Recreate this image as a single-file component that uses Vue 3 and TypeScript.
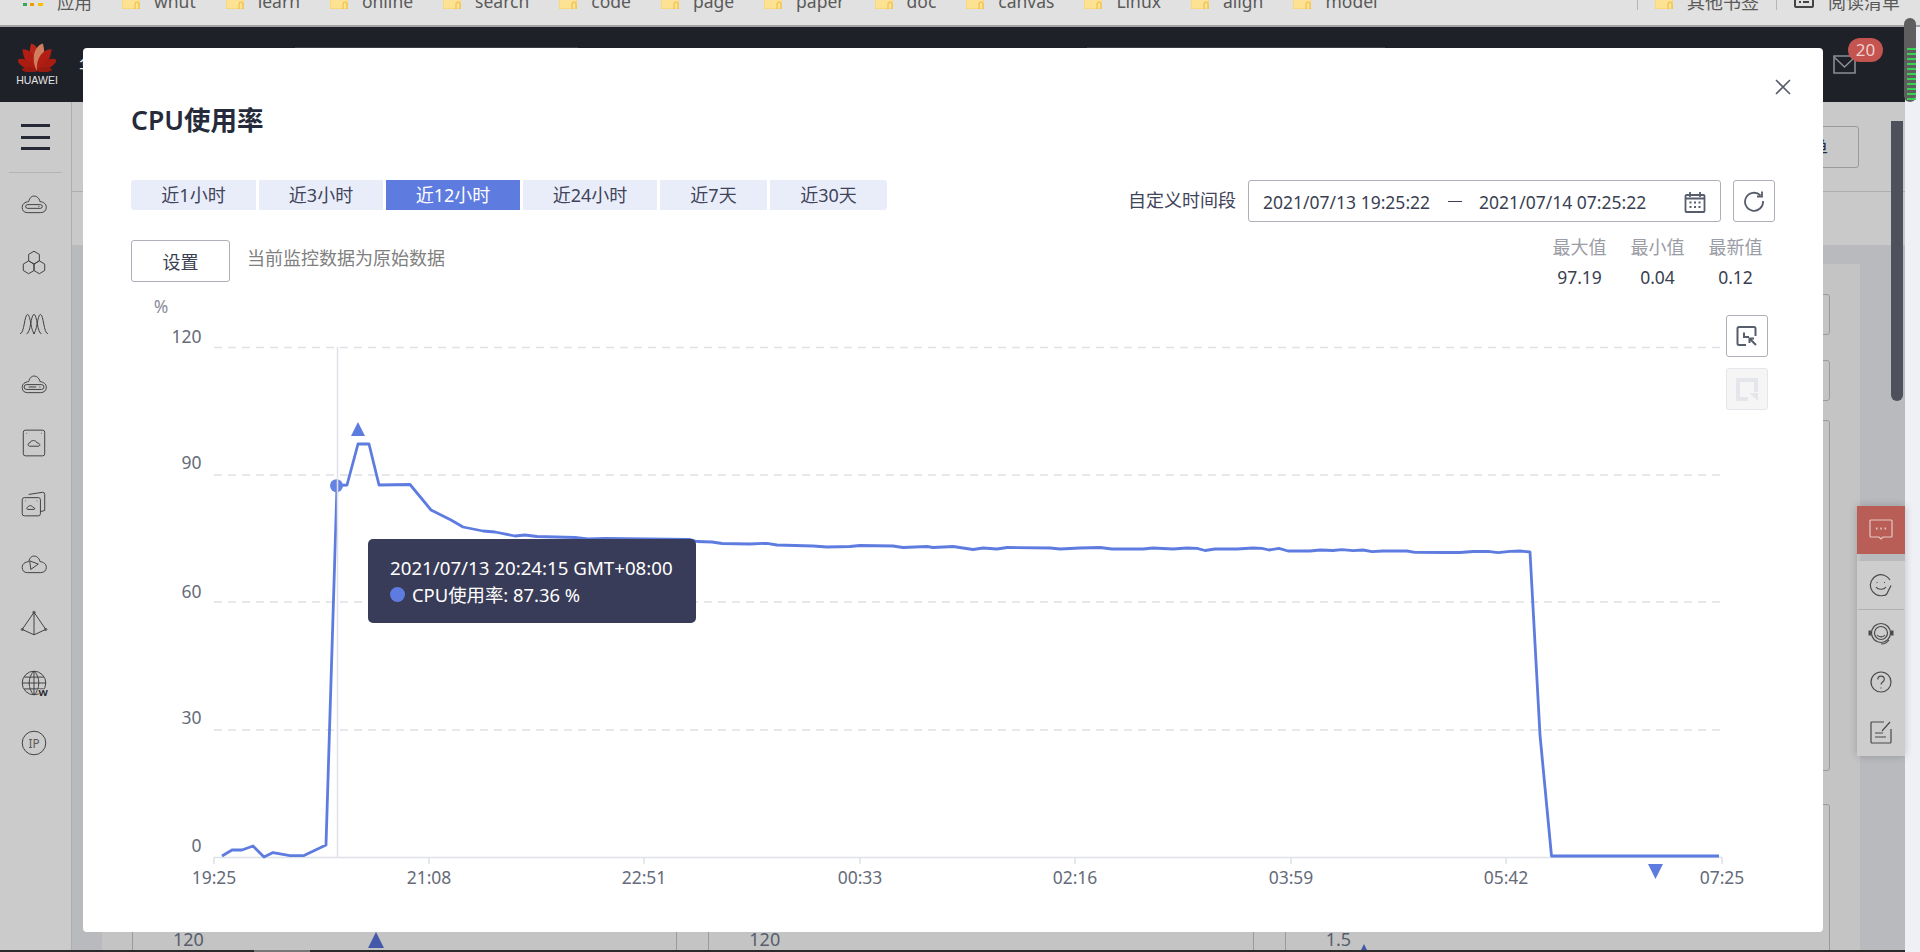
<script setup lang="ts">
const bookmarks = ['whut', 'learn', 'online', 'search', 'code', 'page', 'paper', 'doc', 'canvas', 'Linux', 'align', 'model']

const tabs = [
  { label: '近1小时', width: 125 },
  { label: '近3小时', width: 124 },
  { label: '近12小时', width: 134, active: true },
  { label: '近24小时', width: 134 },
  { label: '近7天', width: 107 },
  { label: '近30天', width: 117 },
]

const stats = [
  { name: '最大值', value: '97.19' },
  { name: '最小值', value: '0.04' },
  { name: '最新值', value: '0.12' },
]

const cloud = 'M3 18c0-3 2.500-5 6-5.300C10 9 12 7.500 14 7.500s5 1.500 5.500 5.200c3.500.3 6 2.300 6 5.300 0 3-2 5-5.500 5H8c-3.500 0-5-2-5-5z'

const sideIcons: string[][] = [
  [cloud, 'M8 15.500h12a1.500 1.500 0 0 1 0 3.500H8a1.500 1.500 0 0 1 0-3.500z', 'M18 17.200h1'],
  ['M14 3l5 3v6l-5 3-5-3V6z', 'M9 12l5 3v6l-5 3-5-3v-6z', 'M19 12l5 3v6l-5 3-5-3v-6z'],
  ['M1 24c4 0 4-18 7-18s3 18 7 18', 'M7 24c4 0 4-18 7-18s3 18 7 18', 'M13 24c4 0 4-18 7-18s3 18 7 18'],
  [cloud, 'M7 15.500h14a2 2 0 0 1 0 4.500H7a2 2 0 0 1 0-4.500z', 'M9 17.700h7', 'M19 17.700h1'],
  ['M6 2h16a2 2 0 0 1 2 2v20a2 2 0 0 1-2 2H6a2 2 0 0 1-2-2V4a2 2 0 0 1 2-2z', 'M10 17c-2 0-2-3 0-3 1-3 6-3 7 0 3 0 3 3 1 3z', 'M7 5h.6', 'M20.500 5h.6'],
  ['M5 9h13a2 2 0 0 1 2 2v13a2 2 0 0 1-2 2H5a2 2 0 0 1-2-2V11a2 2 0 0 1 2-2z', 'M9 6l13-2a2 2 0 0 1 2 2v15l-4 1', 'M8 20c-1 0-1-2 0-2 1-2 4-2 5 0 2 0 2 2 1 2z', 'M6 12h.6', 'M16.500 12h.6'],
  [cloud, 'M10 12l8 3-7 5z'],
  ['M14 4L3 20l11 5 11-5z', 'M14 4v21', 'M3 19a1 1 0 1 0 .01 0z', 'M25 19a1 1 0 1 0 .01 0z', 'M14 3a1 1 0 1 0 .01 0z'],
  ['M14 3a11 11 0 1 0 0 22 11 11 0 0 0 0-22z', 'M14 3c-6 5-6 17 0 22', 'M14 3c6 5 6 17 0 22', 'M3 14h22', 'M5 8.500h18', 'M5 19.500h18', 'M14 3v22'],
]

// huawei logo petals, angle from the vertical and length factor
const petals = [
  { angle: -8, size: 1, fill: '#b8261c' },
  { angle: -30, size: 0.93, fill: '#b21e14' },
  { angle: -58, size: 0.82, fill: '#a81c12' },
  { angle: -82, size: 0.55, fill: '#981a10' },
  { angle: 8, size: 1, fill: '#cf7f5f' },
  { angle: 30, size: 0.93, fill: '#b21e14' },
  { angle: 58, size: 0.82, fill: '#a81c12' },
  { angle: 82, size: 0.55, fill: '#981a10' },
]

// chart is drawn in page coordinates, see viewBox
const linePoints: [number, number][] = [
  [222, 856], [232, 850], [242, 850], [253, 846], [264, 857], [273, 852.6], [290, 855.6], [304, 855.5], [326, 845],
  [337, 485.5], [347, 485], [358, 444], [369, 444], [379, 485], [410, 484.5], [431, 510], [451, 520], [463, 527],
  [483, 531], [495, 532], [515, 536], [525, 535], [537, 536.5], [575, 537.5], [588, 539], [605, 538.5], [690, 539.5],
  [697, 541.5], [712, 542], [722, 543.5], [750, 544], [767, 543.3], [777, 545], [813, 546], [827, 547], [850, 546.5],
  [860, 545.5], [893, 546], [903, 547.5], [927, 546.5], [933, 547.5], [953, 546.5], [973, 549.5], [983, 548], [997, 549],
  [1007, 547.5], [1050, 548], [1060, 549], [1080, 548], [1100, 547.5], [1112, 549], [1143, 549], [1153, 548], [1173, 549],
  [1187, 548], [1197, 548.3], [1205, 550.5], [1215, 549], [1237, 549], [1253, 548], [1262, 548.3], [1269, 550], [1279, 548.3],
  [1288, 551], [1310, 551], [1320, 550], [1333, 550.5], [1342, 549.7], [1353, 550.7], [1363, 550], [1372, 551.7], [1383, 551],
  [1407, 551], [1415, 552.3], [1447, 552.5], [1460, 552.5], [1473, 551.5], [1488, 551.3], [1498, 552.7], [1510, 551.3],
  [1520, 551], [1530, 552], [1540, 735], [1551.5, 856], [1719, 856],
]
const line = linePoints.map((p) => p.join(',')).join(' ')

const gridLines = [347.5, 475, 602, 730]
const yLabels = [
  { text: '120', y: 336 },
  { text: '90', y: 462 },
  { text: '60', y: 591 },
  { text: '30', y: 717 },
  { text: '0', y: 845 },
]
const xLabels = [
  { text: '19:25', x: 214 },
  { text: '21:08', x: 429 },
  { text: '22:51', x: 644 },
  { text: '00:33', x: 860 },
  { text: '02:16', x: 1075 },
  { text: '03:59', x: 1291 },
  { text: '05:42', x: 1506 },
  { text: '07:25', x: 1722 },
]
</script>

<template>
  <div class="page">
    <div class="bookmarks">
      <div class="bm-item">
        <svg class="apps" width="20" height="16" viewBox="0 0 20 16">
          <rect x="0" y="10" width="4" height="3" fill="#34a853" />
          <rect x="7" y="10" width="4" height="3" fill="#f29900" />
          <rect x="15" y="10" width="5" height="3" fill="#fbbc04" />
        </svg>
        <span>应用</span>
      </div>
      <div v-for="name in bookmarks" :key="name" class="bm-item">
        <svg width="18" height="16" viewBox="0 0 18 16">
          <path d="M0 0h13l5 3v13H0z" fill="#fde293" stroke="#f6cf5c" />
          <path d="M13 16v-5a2 2 0 0 1 4 0v5" fill="none" stroke="#eab93a" />
        </svg>
        <span>{{ name }}</span>
      </div>
      <div class="bm-right">
        <i class="bm-sep" />
        <div class="bm-item">
          <svg width="18" height="16" viewBox="0 0 18 16">
            <path d="M0 0h13l5 3v13H0z" fill="#fde293" stroke="#f6cf5c" />
            <path d="M13 16v-5a2 2 0 0 1 4 0v5" fill="none" stroke="#eab93a" />
          </svg>
          <span>其他书签</span>
        </div>
        <i class="bm-sep" />
        <div class="bm-item">
          <svg width="20" height="16" viewBox="0 0 20 16">
            <path d="M1 0v13a1 1 0 0 0 1 1h16a1 1 0 0 0 1-1V0" fill="none" stroke="#444" stroke-width="2" />
            <path d="M5 9h2M9 9h6" stroke="#444" stroke-width="2" />
          </svg>
          <span>阅读清单</span>
        </div>
      </div>
    </div>

    <div class="window">
      <div class="app">
        <header class="topbar">
          <div class="logo">
            <svg width="38" height="30" viewBox="-19 -29 38 30">
              <path
                v-for="p in petals"
                :key="p.angle"
                d="M0 0C-5-6-7-17-2-28 3-26 6-19 5-12 4.500-7 2-3 0 0z"
                :fill="p.fill"
                :transform="`rotate(${p.angle}) scale(${p.angle < 0 ? p.size : -p.size} ${p.size})`"
              />
            </svg>
            <span>HUAWEI</span>
          </div>
          <span class="brand">华为云</span>
          <i class="nav-box first" />
          <i class="nav-box second" />
          <div class="mail">
            <svg width="23" height="19" viewBox="0 0 23 19">
              <path d="M1 1h21v17H1z" fill="none" stroke="#8b8d94" stroke-width="1.600" />
              <path d="M1 2l10.500 10L22 2" fill="none" stroke="#8b8d94" stroke-width="1.600" />
            </svg>
            <span class="badge">20</span>
          </div>
        </header>

        <div class="body">
          <aside class="sidebar">
            <div class="burger"><i /><i /><i /></div>
            <div class="side-list">
              <div v-for="(icon, i) in sideIcons" :key="i" class="side-item">
                <svg width="30" height="30" viewBox="0 0 28 28">
                  <path v-for="d in icon" :key="d" :d="d" />
                  <text v-if="i === 8" x="22.500" y="26" class="globe-w">W</text>
                </svg>
              </div>
              <div class="side-item">
                <svg width="30" height="30" viewBox="0 0 28 28">
                  <circle cx="14" cy="14" r="11" />
                  <text x="14" y="18.500" class="ip">IP</text>
                </svg>
              </div>
            </div>
          </aside>

          <main class="main">
            <div class="toolbar"><button class="bg-btn">查看清单</button></div>
            <div class="subbar" />
            <div class="content">
              <div class="card">
                <div class="field" />
                <div class="field" />
                <div class="big-box" />
                <div class="panels">
                  <div class="panel">
                    <span>120</span>
                    <i class="mini-tri one" />
                  </div>
                  <div class="panel"><span>120</span></div>
                  <div class="panel">
                    <span>1.5</span>
                    <i class="mini-tri two" />
                  </div>
                </div>
              </div>
              <div class="scroll-track"><i /></div>
            </div>
          </main>
        </div>
        <div class="hbar"><i /></div>
      </div>
      <div class="strip" />
    </div>

    <div class="side-thumb"><i v-for="n in 11" :key="n" /></div>

    <div class="float-panel">
      <div class="float-red">
        <svg width="24" height="22" viewBox="0 0 24 22">
          <path d="M2 1h20a1 1 0 0 1 1 1v15a1 1 0 0 1-1 1h-8l-2 2-2-2H2a1 1 0 0 1-1-1V2a1 1 0 0 1 1-1z" />
          <path d="M7 9.500h1.500M11.300 9.500h1.500M15.600 9.500h1.500" stroke-width="2" />
        </svg>
      </div>
      <div class="float-list">
        <div class="float-item">
          <svg width="24" height="24" viewBox="0 0 24 24">
            <path d="M21 7A10.500 10.500 0 1 0 14 22.500c2 0 3.500-.5 4-2l4-8" />
            <path d="M7.500 9.500h1M15 9.500h1M7 14c2 3 8 3 10 0" />
          </svg>
        </div>
        <i class="float-sep" />
        <div class="float-item">
          <svg width="26" height="24" viewBox="0 0 26 24">
            <circle cx="13" cy="11" r="9.500" />
            <circle cx="13" cy="11" r="6.500" />
            <path d="M9 13c2 2.500 6 2.500 8 0" />
            <path d="M2 8.500v5M24 8.500v5" stroke-width="3" />
            <path d="M21 18c-2 3-5 4-8 4" />
          </svg>
        </div>
        <div class="float-item">
          <svg width="24" height="24" viewBox="0 0 24 24">
            <circle cx="12" cy="12" r="10" />
            <path d="M8.800 9.500c0-4.500 6.500-4.500 6.500 0 0 2.500-3.300 2.500-3.300 5M12 17.500v1" />
          </svg>
        </div>
        <div class="float-item last">
          <svg width="24" height="24" viewBox="0 0 24 24">
            <path d="M15 2H3a1 1 0 0 0-1 1v19a1 1 0 0 0 1 1h18a1 1 0 0 0 1-1V9" />
            <path d="M6 13h8M6 17h11M13 11l8-9" />
          </svg>
        </div>
      </div>
    </div>

    <section class="modal">
      <svg class="close" width="16" height="16" viewBox="0 0 16 16">
        <path d="M1 1l14 14M15 1L1 15" />
      </svg>
      <h2 class="title">CPU使用率</h2>

      <div class="row-top">
        <div class="tabs">
          <button
            v-for="t in tabs"
            :key="t.label"
            class="tab"
            :class="{ active: t.active }"
            :style="{ width: t.width + 'px' }"
          >
            {{ t.label }}
          </button>
        </div>
        <div class="range">
          <span class="range-label">自定义时间段</span>
          <div class="date-box">
            <span>2021/07/13 19:25:22</span>
            <i class="date-dash" />
            <span>2021/07/14 07:25:22</span>
            <svg class="cal" width="22" height="22" viewBox="0 0 22 22">
              <path d="M2.500 4h17a1 1 0 0 1 1 1v15a1 1 0 0 1-1 1h-17a1 1 0 0 1-1-1V5a1 1 0 0 1 1-1z" />
              <path d="M6 1v5M16 1v5M2 7.500h18" />
              <path d="M5.500 11.500h2M10 11.500h2M14.500 11.500h2M5.500 16h2M10 16h2M14.500 16h2" stroke-width="2" />
            </svg>
          </div>
          <button class="icon-btn">
            <svg width="22" height="22" viewBox="0 0 22 22">
              <path d="M17.500 5.500A9 9 0 1 0 20 11" />
              <path d="M19 1.500v5h-5" />
            </svg>
          </button>
        </div>
      </div>

      <div class="row-second">
        <button class="btn-set">设置</button>
        <span class="hint">当前监控数据为原始数据</span>
        <div class="stats">
          <div v-for="s in stats" :key="s.name" class="stat">
            <span class="stat-name">{{ s.name }}</span>
            <span class="stat-value">{{ s.value }}</span>
          </div>
        </div>
      </div>

      <div class="chart">
        <svg class="plot" width="1644" height="640" viewBox="131 290 1644 640">
          <text x="161" y="306" class="axis-text mid percent">%</text>
          <line v-for="y in gridLines" :key="y" x1="214" x2="1720" :y1="y" :y2="y" class="grid" />
          <text v-for="l in yLabels" :key="l.text" x="201.500" :y="l.y" class="axis-text end">{{ l.text }}</text>
          <line x1="214" x2="1722" y1="857.500" y2="857.500" class="axis" />
          <line v-for="l in xLabels" :key="l.x" :x1="l.x" :x2="l.x" y1="857" y2="864" class="tick" />
          <text v-for="l in xLabels" :key="l.text" :x="l.x" y="877" class="axis-text mid">{{ l.text }}</text>
          <polyline :points="line" class="series" />
          <circle cx="336.500" cy="485.700" r="6.500" fill="#6482e4" />
          <line x1="337.500" x2="337.500" y1="347" y2="857" class="cross" />
          <polygon points="358,422 351,436 365,436" fill="#5e7ce0" />
          <polygon points="1648,864 1663,864 1655.500,879" fill="#5e7ce0" />
        </svg>

        <div class="tooltip">
          <div>2021/07/13 20:24:15 GMT+08:00</div>
          <div class="tip-row"><i class="tip-dot" />CPU使用率: 87.36 %</div>
        </div>

        <div class="zoom-btns">
          <button class="zoom-btn">
            <svg width="24" height="24" viewBox="0 0 24 24">
              <path d="M11 21H4a1.500 1.500 0 0 1-1.500-1.500v-15A1.500 1.500 0 0 1 4 3h15a1.500 1.500 0 0 1 1.500 1.500V12" />
              <path d="M9 8.500V13h5" />
              <path d="M15 15l6 6M14.500 19v-4.500H19" />
            </svg>
          </button>
          <button class="zoom-btn disabled">
            <svg width="26" height="26" viewBox="0 0 26 26">
              <path d="M14 23H4V4h18v12" stroke-width="4" />
              <path d="M15 17h9v8z" fill="#e4e6ec" stroke="none" />
            </svg>
          </button>
        </div>
      </div>
    </section>
  </div>
</template>

<style>
html,
body {
  margin: 0;
  height: 952px;
  overflow: hidden;
}
</style>

<style scoped>
.page {
  position: relative;
  width: 1920px;
  height: 952px;
  overflow: hidden;
  display: flex;
  flex-direction: column;
  font-family: "Noto Sans", "Noto Sans CJK SC", sans-serif;
  font-size: 18px;
  color: #252b3a;
}

button {
  font: inherit;
  color: inherit;
  padding: 0;
  cursor: pointer;
}

/* bookmarks bar, its text is cut by the top of the page */
.bookmarks {
  flex: none;
  height: 25px;
  box-sizing: content-box;
  border-bottom: 2px solid #a3a3a3;
  background: #e1e1e1;
  display: flex;
  padding-left: 23px;
  gap: 30px;
  overflow: hidden;
  font-size: 17.500px;
  color: #5a5a5a;
}

.bm-item {
  display: flex;
  align-items: center;
  gap: 14px;
  height: 22px;
  margin-top: -10px;
  white-space: nowrap;
}

.bm-item svg {
  flex: none;
}

.bm-right {
  margin-left: auto;
  margin-right: 20px;
  display: flex;
  align-items: flex-start;
  gap: 17px;
  font-size: 18px;
}

.bm-sep {
  width: 1px;
  height: 10px;
  background: #b5b5b5;
}

.window {
  flex: 1;
  min-height: 0;
  display: flex;
}

.app {
  flex: 1;
  min-width: 0;
  display: flex;
  flex-direction: column;
}

.strip {
  width: 15px;
  background: #eff0f6;
}

.topbar {
  flex: none;
  height: 75px;
  background: #1f2129;
  display: flex;
  align-items: flex-start;
  padding-right: 49px;
}

.logo {
  width: 38px;
  margin: 15px 0 0 18px;
  display: flex;
  flex-direction: column;
  align-items: center;
  color: #e3e3e3;
  font-size: 10.500px;
  line-height: 14px;
  font-weight: 500;
  font-family: "Liberation Sans", sans-serif;
}

.logo svg {
  margin-bottom: 1px;
}

.brand {
  margin: 26px 0 0 23px;
  color: #e8e8e8;
  font-size: 18px;
  line-height: 24px;
  white-space: nowrap;
}

.nav-box {
  height: 24px;
  margin-top: 20px;
  border-top: 1px solid #3c3e46;
}

.nav-box.first {
  width: 283px;
  margin-left: 162px;
}

.nav-box.second {
  width: 298px;
  margin-left: 509px;
}

.mail {
  position: relative;
  margin: 28px 0 0 auto;
  width: 23px;
  height: 19px;
}

.badge {
  position: absolute;
  left: 15px;
  top: -17px;
  width: 35px;
  height: 24px;
  border-radius: 12px;
  background: #c4544f;
  color: #f0cfcd;
  font-size: 17px;
  line-height: 24px;
  text-align: center;
}

.body {
  flex: 1;
  min-height: 0;
  display: flex;
}

.sidebar {
  flex: none;
  width: 71px;
  background: #cbcbcb;
  border-right: 1px solid #adadad;
}

.burger {
  height: 70px;
  margin: 0 9px;
  border-bottom: 1px solid #b3b3b3;
  display: flex;
  flex-direction: column;
  justify-content: center;
  gap: 8.500px;
  padding: 0 12px;
}

.burger i {
  display: block;
  height: 3px;
  background: #262936;
}

.side-item {
  height: 60px;
  display: flex;
  align-items: center;
  justify-content: center;
}

.side-item svg {
  margin-right: 3px;
  fill: none;
  stroke: #3d3d3d;
  stroke-width: 0.900;
}

.side-item .ip {
  fill: #5a5a5a;
  stroke: none;
  font-size: 11px;
  text-anchor: middle;
}

.side-item .globe-w {
  fill: #2c2c2c;
  stroke: #cbcbcb;
  stroke-width: 1.500;
  paint-order: stroke;
  font-size: 9px;
  font-weight: 700;
  text-anchor: middle;
}

.main {
  flex: 1;
  min-width: 0;
  display: flex;
  flex-direction: column;
  background: #c9c9c9;
}

.toolbar {
  flex: none;
  height: 90px;
  box-sizing: border-box;
  border-bottom: 1px solid #adadad;
  display: flex;
  justify-content: flex-end;
  padding: 24px 46px 0 0;
}

.bg-btn {
  width: 120px;
  height: 42px;
  border: 1px solid #9a9a9a;
  border-radius: 3px;
  background: transparent;
  text-align: right;
  padding-right: 30px;
}

.subbar {
  flex: none;
  height: 53px;
}

.content {
  flex: 1;
  min-height: 0;
  display: flex;
  background: #b9babe;
  padding: 19px 0 0 30px;
}

.card {
  width: 1758px;
  flex: none;
  box-sizing: border-box;
  background: #c4c4c4;
  padding: 30px 30px 0;
  display: flex;
  flex-direction: column;
  gap: 25px;
  overflow: hidden;
}

.field {
  flex: none;
  height: 41px;
  box-sizing: border-box;
  border: 1px solid #9a9a9a;
  border-radius: 3px;
}

.big-box {
  flex: none;
  height: 351px;
  box-sizing: border-box;
  margin-top: -6px;
  border: 1px solid #9a9a9a;
  border-radius: 3px;
}

.panels {
  flex: none;
  margin-top: 8px;
  display: flex;
  gap: 31px;
}

.panel {
  position: relative;
  flex: 1;
  height: 160px;
  border: 1px solid #9a9a9a;
  border-radius: 3px;
  box-sizing: border-box;
  padding: 121px 0 0 40px;
  color: #575d6c;
  line-height: 26px;
}

.mini-tri {
  position: absolute;
  width: 0;
  height: 0;
  border-left: 8px solid transparent;
  border-right: 8px solid transparent;
  border-bottom: 16px solid #4459a8;
}

.mini-tri.one {
  left: 235px;
  top: 127px;
}

.mini-tri.two {
  left: 70px;
  top: 139px;
}

.scroll-track {
  flex: none;
  width: 14px;
  margin: -143px 0 0 31px;
}

.scroll-track i {
  display: block;
  width: 12px;
  height: 280px;
  border-radius: 0 0 6px 6px;
  background: #4e505c;
}

.hbar {
  flex: none;
  height: 2px;
  background: #2b2b2b;
}

.hbar i {
  display: block;
  width: 56px;
  height: 2px;
  margin-left: 254px;
  background: #777;
}

.side-thumb {
  position: absolute;
  left: 1904px;
  top: 18px;
  width: 12px;
  height: 84px;
  box-sizing: border-box;
  padding-top: 30px;
  border-radius: 6px;
  background: #5e5e5e;
  display: flex;
  flex-direction: column;
  gap: 3px;
}

.side-thumb i {
  height: 2px;
  margin-left: 3px;
  background: #39d353;
}

.float-panel {
  position: absolute;
  left: 1857px;
  top: 506px;
  width: 48px;
  display: flex;
  flex-direction: column;
  box-shadow: 0 0 8px rgba(0, 0, 0, 0.2);
}

.float-red {
  height: 48px;
  background: #b85e56;
  display: flex;
  align-items: center;
  justify-content: center;
}

.float-red svg {
  fill: none;
  stroke: #e6c9c6;
  stroke-width: 1.200;
}

.float-list {
  margin-top: 7px;
  height: 195px;
  background: #cdcdcd;
}

.float-item {
  height: 48px;
  display: flex;
  align-items: center;
  justify-content: center;
}

.float-item.last {
  padding-top: 3px;
  box-sizing: border-box;
}

.float-item svg {
  fill: none;
  stroke: #4a4a4a;
  stroke-width: 1.200;
}

.float-sep {
  display: block;
  height: 1px;
  margin: 0 1px;
  background: #b0b0b0;
}

/* dialog */
.modal {
  position: absolute;
  left: 83px;
  top: 48px;
  width: 1740px;
  height: 884px;
  box-sizing: border-box;
  padding: 0 48px;
  background: #fff;
  border-radius: 4px;
}

.close {
  position: absolute;
  right: 32px;
  top: 31px;
  fill: none;
  stroke: #575d6c;
  stroke-width: 1.600;
}

.title {
  margin: 56px 0 0;
  height: 32px;
  font-size: 26.500px;
  line-height: 32px;
  font-weight: 600;
  color: #252b3a;
}

.row-top {
  margin-top: 44px;
  display: flex;
  justify-content: space-between;
  align-items: flex-start;
}

.tabs {
  display: flex;
  gap: 3px;
}

.tab {
  height: 30px;
  border: none;
  background: #e9edfa;
  color: #3f4459;
  font-size: 18px;
  line-height: 30px;
}

.tab:first-child {
  border-radius: 3px 0 0 3px;
}

.tab:last-child {
  border-radius: 0 3px 3px 0;
}

.tab.active {
  background: #5e7ce0;
  color: #fff;
}

.range {
  display: flex;
  align-items: center;
}

.range-label {
  color: #3f4459;
  margin-right: 12px;
  position: relative;
  top: -2px;
}

.date-box {
  width: 473px;
  height: 42px;
  box-sizing: border-box;
  border: 1px solid #adb0b8;
  border-radius: 3px;
  display: flex;
  align-items: center;
  padding: 1px 14px 0;
  font-size: 17.500px;
  color: #3a3f52;
  white-space: nowrap;
}

.date-dash {
  width: 14px;
  height: 1px;
  margin: 0 17px 0 18px;
  background: #3a3f52;
}

.cal {
  margin-left: auto;
  fill: none;
  stroke: #575d6c;
  stroke-width: 1.800;
}

.icon-btn {
  width: 42px;
  height: 42px;
  margin-left: 12px;
  box-sizing: border-box;
  border: 1px solid #adb0b8;
  border-radius: 3px;
  background: #fff;
  display: flex;
  align-items: center;
  justify-content: center;
}

.icon-btn svg {
  fill: none;
  stroke: #575d6c;
  stroke-width: 1.800;
}

.row-second {
  margin-top: 18px;
  height: 50px;
  display: flex;
  align-items: flex-start;
}

.btn-set {
  width: 99px;
  height: 42px;
  box-sizing: border-box;
  border: 1px solid #adb0b8;
  border-radius: 3px;
  background: #fff;
  color: #3a3f52;
}

.hint {
  margin: 6px 0 0 17px;
  color: #808080;
  line-height: 24px;
}

.stats {
  margin: -8px 12px 0 auto;
  display: flex;
  gap: 23px;
}

.stat {
  width: 55px;
  display: flex;
  flex-direction: column;
  align-items: center;
  line-height: 30px;
}

.stat-name {
  color: #9a9ca6;
}

.stat-value {
  color: #3a3f52;
  font-size: 17.500px;
}

.chart {
  position: relative;
}

.plot {
  display: block;
}

.axis-text {
  fill: #666b7a;
  font-size: 17.500px;
  dominant-baseline: central;
}

.axis-text.end {
  text-anchor: end;
}

.axis-text.mid {
  text-anchor: middle;
}

.axis-text.percent {
  fill: #8a8d99;
}

.grid {
  stroke: #dfe1e6;
  stroke-width: 1.500;
  stroke-dasharray: 8 6;
}

.axis,
.tick,
.cross {
  stroke: #dfe1e6;
  stroke-width: 1.500;
}

.series {
  fill: none;
  stroke: #5e7ce0;
  stroke-width: 2.800;
  stroke-linejoin: round;
}

.tooltip {
  position: absolute;
  left: 237px;
  top: 249px;
  width: 328px;
  height: 84px;
  box-sizing: border-box;
  padding: 15px 22px 0;
  background: #393c58;
  border-radius: 5px;
  color: #fff;
  font-size: 18.700px;
  line-height: 27px;
  white-space: nowrap;
}

.tip-row {
  display: flex;
  align-items: center;
  font-size: 18.400px;
}

.tip-dot {
  width: 15px;
  height: 15px;
  margin-right: 7px;
  border-radius: 50%;
  background: #5e7ce0;
}

.zoom-btns {
  position: absolute;
  left: 1595px;
  top: 25px;
  display: flex;
  flex-direction: column;
  gap: 11px;
}

.zoom-btn {
  width: 42px;
  height: 42px;
  box-sizing: border-box;
  border: 1px solid #adb0b8;
  border-radius: 3px;
  background: #fff;
  display: flex;
  align-items: center;
  justify-content: center;
}

.zoom-btn svg {
  fill: none;
  stroke: #575d6c;
  stroke-width: 2;
}

.zoom-btn.disabled {
  background: #f5f5f6;
  border-color: #e4e6ec;
}

.zoom-btn.disabled svg {
  stroke: #e4e6ec;
}
</style>
